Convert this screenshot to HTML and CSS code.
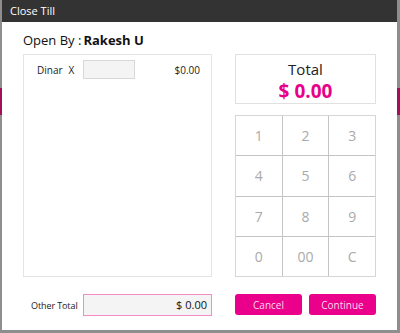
FILE: index.html
```html
<!DOCTYPE html>
<html lang="en">
<head>
    <meta charset="UTF-8">
    <title>Close Till</title>
    <link rel="stylesheet" href="styles.css">
</head>
<body>
    <div class="dialog">
        <div class="title-bar">Close Till</div>
        <div class="content">
            <div class="open-by">Open By :<b>Rakesh U</b></div>
            <div class="main">
                <div class="denoms">
                    <div class="denom-row">
                        <span class="denom-name">Dinar</span>
                        <span class="denom-x">X</span>
                        <input type="text" class="denom-input">
                        <span class="denom-amount">$0.00</span>
                    </div>
                </div>
                <div class="right-col">
                    <div class="total-box">
                        <div class="total-label">Total</div>
                        <div class="total-value">$ 0.00</div>
                    </div>
                    <div class="keypad">
                        <button>1</button><button>2</button><button>3</button>
                        <button>4</button><button>5</button><button>6</button>
                        <button>7</button><button>8</button><button>9</button>
                        <button>0</button><button>00</button><button>C</button>
                    </div>
                </div>
            </div>
            <div class="footer">
                <div class="other-total">
                    <span class="other-label">Other Total</span>
                    <div class="other-input">$ 0.00</div>
                </div>
                <div class="actions">
                    <button class="btn">Cancel</button>
                    <button class="btn">Continue</button>
                </div>
            </div>
        </div>
    </div>
</body>
</html>
```

FILE: styles.css
```css
body {
    margin: 0;
    padding: 0 3px 3px 2px;
    height: 333px;
    box-sizing: border-box;
    background: linear-gradient(#8e8e8e 88px, #a0105e 88px, #a0105e 115px, #8e8e8e 115px);
    font-family: "Open Sans", "Noto Sans", sans-serif;
    overflow: hidden;
}
.dialog {
    height: 330px;
    background-color: white;
    display: flex;
    flex-direction: column;
}
.title-bar {
    height: 22px;
    line-height: 22px;
    background-color: #333333;
    color: white;
    font-size: 11px;
    padding-left: 8px;
}
.content {
    padding: 0 21px;
}
.open-by {
    font-size: 13px;
    color: #111;
    line-height: 16px;
    padding-top: 10px;
    margin-bottom: 6px;
}
.open-by b { margin-left: 2px; }
.main {
    display: flex;
    gap: 23px;
    height: 223px;
}
.denoms {
    width: 189px;
    box-sizing: border-box;
    border: 1px solid #e4e4e4;
    padding: 5px 11px 0 13px;
}
.denom-row {
    display: flex;
    align-items: center;
    font-size: 10px;
    color: #222;
}
.denom-x { margin-left: 6px; }
.denom-input {
    width: 52px;
    height: 19px;
    box-sizing: border-box;
    margin: 0 0 0 9px;
    border: 1px solid #d8d8d8;
    background-color: #f4f4f4;
    padding: 0;
}
.denom-amount { margin-left: auto; }
.right-col {
    width: 141px;
    display: flex;
    flex-direction: column;
    gap: 11px;
}
.total-box {
    height: 50px;
    box-sizing: border-box;
    border: 1px solid #e0e0e0;
    text-align: center;
    padding-top: 4px;
}
.total-label {
    font-size: 15px;
    line-height: 20px;
    color: #222;
}
.total-value {
    font-size: 19px;
    line-height: 24px;
    font-weight: bold;
    color: #e8008b;
}
.keypad {
    flex: 1;
    display: grid;
    grid-template-columns: repeat(3, 1fr);
    grid-template-rows: repeat(4, 1fr);
    gap: 1px;
    background-color: #c4c4c4;
    border: 1px solid #d6d6d6;
}
.keypad button {
    border: none;
    background-color: white;
    font-family: inherit;
    font-size: 14px;
    color: #aaaaaa;
    padding: 0;
}
.footer {
    display: flex;
    gap: 23px;
    margin-top: 17px;
}
.other-total {
    width: 189px;
    display: flex;
    align-items: center;
    justify-content: space-between;
}
.other-label {
    font-size: 9px;
    letter-spacing: -0.1px;
    color: #222;
    margin-left: 8px;
    white-space: nowrap;
}
.other-input {
    width: 129px;
    height: 22px;
    box-sizing: border-box;
    border: 1px solid #f48ac6;
    background-color: #f4f4f4;
    font-size: 11px;
    line-height: 20px;
    text-align: right;
    padding-right: 4px;
    color: #111;
}
.actions {
    width: 141px;
    display: flex;
    gap: 7px;
}
.btn {
    flex: 1;
    height: 21px;
    border: none;
    border-radius: 3px;
    background-color: #ea008b;
    color: #fbd6ec;
    font-family: inherit;
    font-size: 10px;
    padding: 0;
}
```
